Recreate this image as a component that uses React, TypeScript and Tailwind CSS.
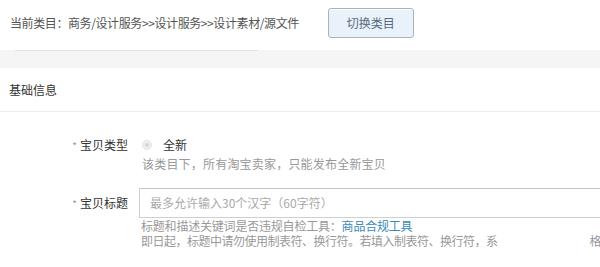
export default function App() {
  return (
    <div
      className="w-[600px] h-[267px] overflow-hidden bg-white text-[12px] text-[#555]"
      style={{ fontFamily: '"Noto Sans CJK SC", "Noto Sans", sans-serif' }}
    >
      {/* category bar */}
      <div className="flex items-center h-[44px] pl-[10px] pt-[1px]">
        <span className="leading-[20px] tracking-[-0.4px]">
          当前类目：商务/设计服务&gt;&gt;设计服务&gt;&gt;设计素材/源文件
        </span>
        <button className="ml-[29px] w-[86px] h-[30px] rounded-[3px] border border-[#a9b3bf] bg-[#e9f1fb] text-[12px] text-[#5a6a7e] shadow-[inset_0_1px_0_#fff]">
          切换类目
        </button>
      </div>

      <div className="mt-[6px] h-[18px] bg-[#f5f5f5]">
        <div className="ml-[15px] w-[243px] border-t border-[#e4e4e4]" />
      </div>

      {/* section header */}
      <div className="flex items-center h-[44px] pl-[9px] border-b border-[#ececec] text-[#333]">
        基础信息
      </div>

      {/* item type */}
      <div className="mt-[23px] flex">
        <div className="w-[129px] shrink-0 flex justify-end items-center h-[20px] pr-[1px] text-[#333]">
          <span className="text-[#999] text-[10px] mr-[3px]">*</span>
          宝贝类型
        </div>
        <div className="ml-[10px] pl-[3px]">
          <div className="flex items-center h-[20px]">
            <span className="w-[10px] h-[10px] rounded-full border border-[#e2e2e2] bg-[#f0f0f0] flex items-center justify-center">
              <span className="w-[4px] h-[4px] rounded-full bg-[#d6d6d6]" />
            </span>
            <span className="ml-[11px] text-[#333]">全新</span>
          </div>
          <div className="leading-[18px] text-[#999] tracking-[0.2px]">
            该类目下，所有淘宝卖家，只能发布全新宝贝
          </div>
        </div>
      </div>

      {/* title */}
      <div className="mt-[15px] flex">
        <div className="w-[129px] shrink-0 flex justify-end items-center h-[30px] pr-[1px] text-[#333]">
          <span className="text-[#999] text-[10px] mr-[3px]">*</span>
          宝贝标题
        </div>
        <div className="ml-[10px] flex-1 min-w-0">
          <div className="h-[30px] w-[480px] border border-[#cfcfcf] border-t-[#c4c4c4] flex items-center pl-[10px] text-[#aaa]">
            最多允许输入30个汉字（60字符）
          </div>
          <div className="pl-[2px] leading-[15px] text-[#999] whitespace-nowrap">
            <div className="tracking-[-0.2px]">
              标题和描述关键词是否违规自检工具：<span className="text-[#3b8bb5]">商品合规工具</span>
            </div>
            <div className="flex tracking-[-0.5px]">
              <span>即日起，标题中请勿使用制表符、换行符。若填入制表符、换行符，系</span>
              <span className="ml-[92px]">格</span>
            </div>
          </div>
        </div>
      </div>
    </div>
  );
}
